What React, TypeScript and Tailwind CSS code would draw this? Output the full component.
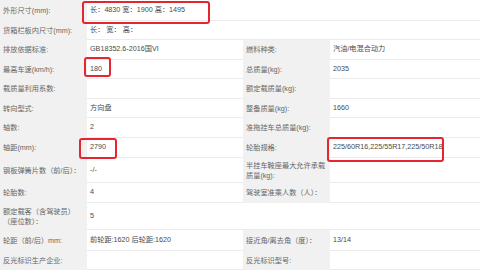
import React from "react";

type Row = {
  h: string;
  l: React.ReactNode;
  v?: React.ReactNode;
  rl?: React.ReactNode;
  rv?: React.ReactNode;
  wide?: boolean;
  blankRight?: boolean;
};

const rows: Row[] = [
  { h: "h-[21px]", l: "外形尺寸(mm):", v: "长：4830 宽：1900 高：1495", wide: true },
  { h: "h-[19px]", l: "货箱栏板内尺寸(mm):", v: "长： 宽： 高：", wide: true },
  { h: "h-[20px]", l: "排放依据标准:", v: "GB18352.6-2016国VI", rl: "燃料种类:", rv: "汽油/电混合动力" },
  { h: "h-[19px]", l: "最高车速(km/h):", v: "180", rl: "总质量(kg):", rv: "2035" },
  { h: "h-[20px]", l: "载质量利用系数:", v: "", rl: "额定载质量(kg):", rv: "" },
  { h: "h-[19px]", l: "转向型式:", v: "方向盘", rl: "整备质量(kg):", rv: "1660" },
  { h: "h-[20px]", l: "轴数:", v: "2", rl: "准拖挂车总质量(kg):", rv: "" },
  { h: "h-[20px]", l: "轴距(mm):", v: "2790", rl: "轮胎规格:", rv: "225/60R16,225/55R17,225/50R18" },
  {
    h: "h-[25px]",
    l: "钢板弹簧片数（前/后）：",
    v: "-/-",
    rl: (
      <>
        半挂车鞍座最大允许承载
        <br />
        质量(kg):
      </>
    ),
    rv: "",
  },
  { h: "h-[20px]", l: "轮胎数:", v: "4", rl: "驾驶室准乘人数（人）：", rv: "" },
  {
    h: "h-[27px]",
    l: (
      <>
        额定载客（含驾驶员）
        <br />
        （座位数）：
      </>
    ),
    v: "5",
    blankRight: true,
  },
  { h: "h-[21px]", l: "轮距（前/后）mm:", v: "前轮距:1620 后轮距:1620", rl: "接近角/离去角（度）：", rv: "13/14" },
  { h: "h-[19px]", l: "反光标识生产企业:", v: "", rl: "反光标识型号:", rv: "" },
];

const label = "flex items-center bg-[#f1f1f1] px-[3px] text-[#666] leading-[10px]";
const value = "flex items-center border-b border-[#ebebeb] px-[3px] text-[#4a4a4a] bg-white";

export default function App() {
  return (
    <div
      className="relative w-[480px] h-[270px] overflow-hidden bg-white text-[7.2px]"
      style={{ fontFamily: '"Liberation Sans", "Noto Sans CJK SC", sans-serif' }}
    >
      {rows.map((r, i) => (
        <div key={i} className={`grid grid-cols-[87px_156px_87px_150px] ${r.h}`}>
          <div className={label}>
            <span>{r.l}</span>
          </div>
          {r.wide ? (
            <div className={`${value} col-span-3`}>{r.v}</div>
          ) : r.blankRight ? (
            <>
              <div className={value}>{r.v}</div>
              <div className="col-span-2 border-b border-[#ebebeb] bg-white" />
            </>
          ) : (
            <>
              <div className={value}>{r.v}</div>
              <div className={label}>
                <span>{r.rl}</span>
              </div>
              <div className={value}>{r.rv}</div>
            </>
          )}
        </div>
      ))}

      {/* red highlight boxes */}
      <div className="absolute left-[82px] top-[1px] w-[128px] h-[23px] rounded-[3px] border-2 border-[#e3262f]" />
      <div className="absolute left-[84px] top-[57px] w-[27px] h-[20px] rounded-[3px] border-2 border-[#e3262f]" />
      <div className="absolute left-[79px] top-[138px] w-[38px] h-[21px] rounded-[3px] border-2 border-[#e3262f]" />
      <div className="absolute left-[327px] top-[137px] w-[117px] h-[25px] rounded-[3px] border-2 border-[#e3262f]" />
    </div>
  );
}
